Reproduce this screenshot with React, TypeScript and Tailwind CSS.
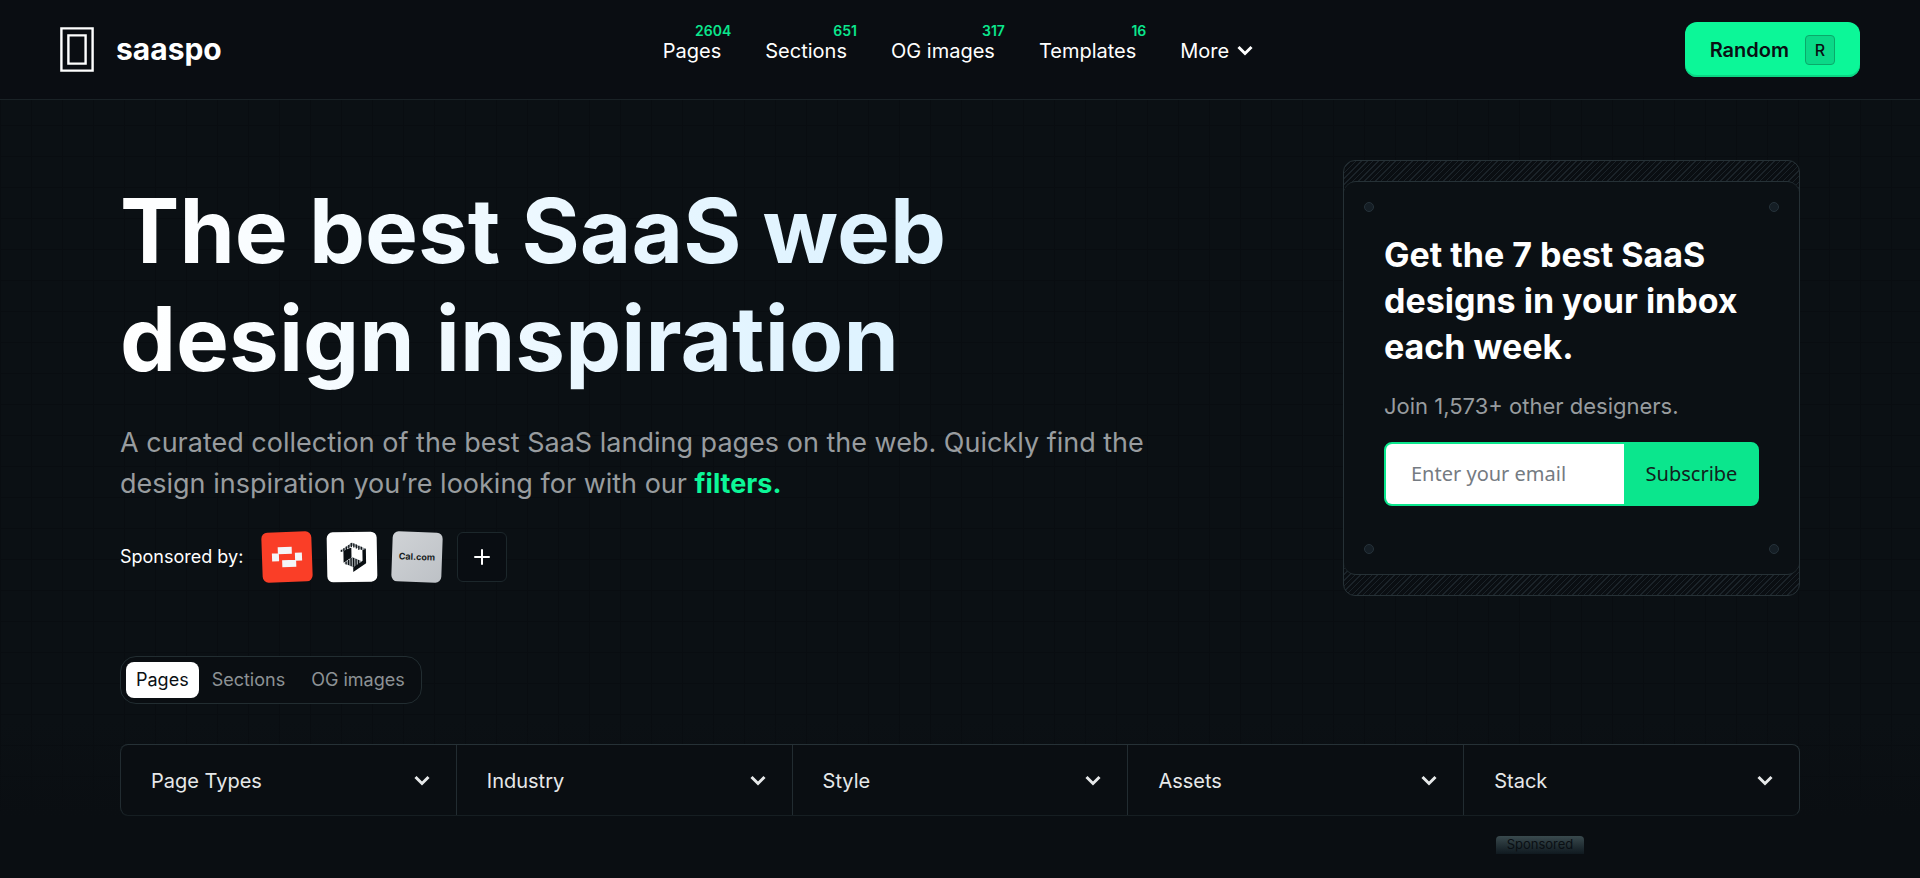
import { Plus } from "lucide-react";

const NAV = [
  { label: "Pages", count: 2604 },
  { label: "Sections", count: 651 },
  { label: "OG images", count: 317 },
  { label: "Templates", count: 16 },
];

const FILTERS = ["Page Types", "Industry", "Style", "Assets", "Stack"];

const TABS = ["Pages", "Sections", "OG images"];

const GRID =
  "bg-[linear-gradient(to_right,#090d11_1px,transparent_1px),linear-gradient(to_bottom,#090d11_1px,transparent_1px)] bg-[size:31px_31px] bg-[position:0_25px]";

function Chevron({ className = "" }: { className?: string }) {
  return (
    <svg viewBox="0 0 16 12" className={`h-3 w-4 ${className}`} fill="none" aria-hidden="true">
      <path d="M1.500 2 8 8.500 14.500 2" stroke="currentColor" strokeWidth="3" />
    </svg>
  );
}

function Header() {
  return (
    <header className="grid h-[100px] grid-cols-[1fr_auto_1fr] items-center border-b border-[#1a2226] bg-[#0a0d12] px-[60px]">
      <a href="#" className="flex items-center gap-[22px] text-[30px] font-bold text-white">
        <svg viewBox="0 0 34 45" className="h-[45px] w-[34px]" fill="none" stroke="#fff" strokeWidth="2.4" aria-hidden="true">
          <path d="M1.4 1.4h31.2v42.2H1.4zM8.4 8.4h17.2v28.2H8.4z" />
        </svg>
        <span>saaspo</span>
      </a>

      <nav className="flex items-center gap-11 pt-0.5 pr-1 text-xl text-white">
        {NAV.map((item) => (
          <a key={item.label} href="#" className="relative">
            {item.label}
            <span className="absolute -top-3.5 -right-2.5 text-sm leading-4 font-semibold text-[#0be68d]">
              {item.count}
            </span>
          </a>
        ))}
        <button type="button" className="flex items-center gap-2">
          More <Chevron />
        </button>
      </nav>

      <button
        type="button"
        className="flex h-[55px] items-center gap-4 justify-self-end rounded-xl bg-[#0cf798] px-[25px] text-xl font-semibold text-[#0a0f13] shadow-[inset_0_-2px_0_#0bd483]"
      >
        Random
        <kbd className="flex size-[30px] items-center justify-center rounded-sm border border-[#0aa96a] bg-[#0bd988] text-base font-medium">
          <span className="font-['Inter',sans-serif]">R</span>
        </kbd>
      </button>
    </header>
  );
}

function Sponsors() {
  return (
    <div className="mt-[28px] flex items-center gap-[15px]">
      <span className="mr-[4px] text-lg text-white">Sponsored by:</span>
      <a href="#" aria-label="Sponsor one" className="size-[50px] -rotate-2 overflow-hidden rounded-md bg-[#fa3e27]">
        <svg viewBox="0 0 50 50" fill="#f4f6f8">
          <path d="M16 15h14v7H16zM10 21h7v8h-7zM33 21h7v8h-7zM20 28h14v7H20z" />
        </svg>
      </a>
      <a href="#" aria-label="Sponsor two" className="size-[50px] -rotate-1 overflow-hidden rounded-md bg-white">
        <svg viewBox="0 0 50 50">
          <path d="M16.500 18.500v12l8-5v-10zM26 34.500V40l13-8.500V17l-3.500-1v13z" fill="#0a0f13" />
          <path d="M13 19l12-8.500L39 17l-3.500 1.500-10.500-5-9 6zM17 31l8.500-6 9.500 4.500-9 6z" fill="#9aa0a4" />
          <path
            d="M14.500 17.500v2M17 16v3M19.500 14.500v3.500M22 13v3.500M24.500 11v4M27 11.500v4M29.500 12.500v4M32 14v4M34.500 15v3M19 29.500v3M21.500 28v5M24 26v8M26.500 26v9M29 27v7M31.500 28v4"
            stroke="#0a0f13"
            strokeWidth="1.200"
          />
        </svg>
      </a>
      <a
        href="#"
        className="flex size-[50px] rotate-2 items-center justify-center rounded-md bg-linear-to-br from-[#d0d3d6] to-[#bdc1c6] text-[9px] font-bold text-[#1a1e22]"
      >
        Cal.com
      </a>
      <a
        href="#"
        aria-label="Become a sponsor"
        className="flex size-[50px] items-center justify-center rounded-md border border-[#1c272b] bg-[#090d12] text-white"
      >
        <Plus className="size-6" strokeWidth={2} />
      </a>
    </div>
  );
}

function Screws({ className }: { className: string }) {
  return (
    <div className={`flex justify-between px-5 ${className}`} aria-hidden="true">
      <span className="size-[10px] rounded-full border border-[#26323a] bg-[#151e25]" />
      <span className="size-[10px] rounded-full border border-[#26323a] bg-[#151e25]" />
    </div>
  );
}

function Newsletter() {
  return (
    <aside className="w-[457px] shrink-0 self-start rounded-xl border border-[#263136] bg-[repeating-linear-gradient(135deg,#1b2329_0px,#1b2329_1px,#0a0e12_1px,#0a0e12_4px)] py-5">
      <div className="rounded-xl border-y border-[#263136] bg-[#0b1014]">
        <Screws className="pt-5" />
        <div className="px-10">
          <h2 className="mt-[20px] text-[34px] leading-[46px] font-bold text-white">
            Get the 7 best SaaS designs in your inbox each week.
          </h2>
          <p className="mt-[20px] text-[22px] leading-8 text-[#989c9f]">Join 1,573+ other designers.</p>
          <form
            className="mt-[20px] flex h-16 overflow-hidden rounded-lg border-2 border-[#0be68d] bg-[#0be68d] font-['Noto_Sans',sans-serif] text-xl"
            onSubmit={(e) => e.preventDefault()}
          >
            <input
              type="email"
              aria-label="Email"
              placeholder="Enter your email"
              className="min-w-0 flex-1 bg-white pr-2 pl-[25px] text-[#0a0f13] outline-none placeholder:text-[#757b82]"
            />
            <button type="submit" className="w-[133px] pl-0.5 text-[#12201c]">
              Subscribe
            </button>
          </form>
        </div>
        <Screws className="pt-[38px] pb-5" />
      </div>
    </aside>
  );
}

export default function App() {
  return (
    <div className="min-h-screen overflow-hidden bg-[#0b1014] font-['Inter',sans-serif]">
      <Header />

      <main className={GRID}>
        <div className="min-h-[778px] bg-[linear-gradient(to_top,#0a0e12_60px,transparent_160px)] px-[120px]">
          <section className="flex justify-between pt-[60px]">
            <div className="pt-[17px]">
              <h1 className="bg-linear-to-r from-white to-[#dff3ff] to-70% bg-clip-text text-[89px] leading-[108px] font-bold text-transparent">
                The best SaaS web
                <br />
                design inspiration
              </h1>
              <p className="mt-[29px] text-[27px] leading-[41px] text-[#989c9f]">
                A curated collection of the best SaaS landing pages on the web. Quickly find the
                <br />
                design inspiration you’re looking for with our{" "}
                <a href="#filters" className="font-bold text-[#0cf798]">
                  filters.
                </a>
              </p>
              <Sponsors />
            </div>
            <Newsletter />
          </section>

          <div className="mt-[60px] flex w-fit items-center rounded-2xl border border-[#222d31] bg-[#0a0e12] p-[5px] pr-[3px] text-lg">
            {TABS.map((tab, i) => (
              <button
                key={tab}
                type="button"
                className={i === 0 ? "h-9 rounded-lg bg-white px-2.5 text-[#0a0f13]" : "h-9 px-[13px] text-[#8d9295]"}
              >
                {tab}
              </button>
            ))}
          </div>

          <div
            id="filters"
            className="mt-10 grid grid-cols-5 rounded-lg border-y border-r border-[#263136] border-b-[#161e22] bg-[#0a0e12]"
          >
            {FILTERS.map((name) => (
              <label key={name} className="relative border-l border-[#222c31] first:rounded-l-lg">
                <select
                  aria-label={name}
                  className="h-[70px] w-full appearance-none bg-transparent px-[30px] pt-0.5 text-xl text-[#e6e8e9]"
                >
                  <option>{name}</option>
                </select>
                <Chevron className="pointer-events-none absolute top-[30px] right-[26px] text-[#e6e8e9]" />
              </label>
            ))}
          </div>

          <div className="mt-5 grid grid-cols-5">
            <div className="col-start-5 px-8">
              <span className="flex h-[18px] w-[88px] items-center justify-center rounded-t-sm bg-linear-to-b from-[#3a4a4e] to-[#101a20] text-[13px] text-[#0a0f13]">
                Sponsored
              </span>
            </div>
          </div>
        </div>
      </main>
    </div>
  );
}
